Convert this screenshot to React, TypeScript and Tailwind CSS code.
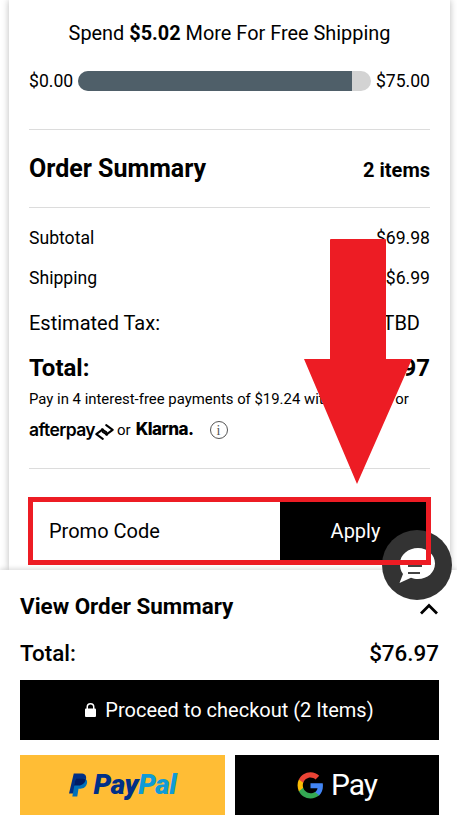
import React from "react";

function Row({ left, right, className }: { left: React.ReactNode; right: React.ReactNode; className: string }) {
  return (
    <div className={`flex items-center justify-between ${className}`}>
      <span>{left}</span>
      <span>{right}</span>
    </div>
  );
}

function GoogleG() {
  return (
    <svg width="27" height="27" viewBox="0 0 48 48" aria-hidden="true">
      <path fill="#4285F4" d="M46.100 24.500c0-1.600-.1-3.100-.4-4.500H24v8.900h12.500c-.5 2.900-2.200 5.400-4.600 7v5.800h7.500c4.300-4 6.700-9.900 6.700-17.200z" />
      <path fill="#34A853" d="M24 47c6.200 0 11.400-2.100 15.400-5.700l-7.500-5.800c-2.100 1.400-4.700 2.200-7.900 2.200-6 0-11.200-4.100-13-9.600H3.300v6C7.100 41.700 15 47 24 47z" />
      <path fill="#FBBC05" d="M11 28.100c-.5-1.400-.7-2.900-.7-4.400s.3-3 .7-4.400v-6H3.300C1.800 16.400 1 19.900 1 23.700s.8 7.300 2.300 10.400l7.700-6z" />
      <path fill="#EA4335" d="M24 9.700c3.400 0 6.500 1.200 8.900 3.500l6.600-6.600C35.400 2.900 30.200.5 24 .5 15 .5 7.100 5.700 3.300 13.300l7.700 6c1.800-5.500 7-9.600 13-9.600z" />
    </svg>
  );
}

function PayPalMark() {
  return (
    <svg width="19" height="24" viewBox="0 0 20 24" aria-hidden="true">
      <path fill="#003087" d="M5 0h7.500C16.500 0 18.500 2 18 5.500 17.300 10 14 12.500 10 12.500H7.500L6 21H0L5 0z" />
      <path fill="#0070BA" d="M7 5h7c3.500 0 5.500 1.600 5 5-.7 4-3.700 6-7 6h-2l-1.300 8H3.500L7 5z" />
      <path fill="#001C64" d="M7 5h6.500c1.800 0 3.200.4 4.200 1.200C16.800 10 14 12.500 10 12.500H5.300L7 5z" />
    </svg>
  );
}

function AfterpayMark() {
  return (
    <svg width="19" height="18" viewBox="0 0 22 20" fill="none" stroke="#000" strokeWidth="2.300" strokeLinejoin="round" strokeLinecap="round" className="mt-[3px]" aria-hidden="true">
      <path d="M13 2l7.500 5.500L13 13v-3L8 7" />
      <path d="M9 18l-7.500-5.500L9 7v3l5 3" />
    </svg>
  );
}

export default function App() {
  return (
    <div className="relative h-[822px] w-[457px] overflow-hidden bg-white font-['Roboto',sans-serif] text-black">
      <main className="ml-[9px] h-[570px] w-[441px] bg-white px-5 shadow-[0_0_7px_rgba(0,0,0,0.28)]">
        <p className="mb-[3px] flex h-[68px] items-center justify-center text-[19.900px]">
          <span>
            Spend <b className="font-bold">$5.02</b> More For Free Shipping
          </span>
        </p>
        <div className="flex h-[20px] items-center justify-between text-[17.600px]">
          <span>$0.00</span>
          <div className="h-5 w-[293px] overflow-hidden rounded-[10px] bg-[#d3d3d3]">
            <div className="h-full w-[274px] bg-[#4f5f69]" />
          </div>
          <span>$75.00</span>
        </div>
        <div className="mt-[38px] h-px bg-[#dcdcdc]" />
        <Row left="Order Summary" right={<span className="text-[20px]">2 items</span>} className="h-[77px] text-[25px] font-bold" />
        <div className="h-px bg-[#dcdcdc]" />
        <Row left="Subtotal" right="$69.98" className="mt-[10px] h-[40px] text-[17.600px]" />
        <Row left="Shipping" right="$6.99" className="h-[40px] text-[17.600px]" />
        <div className="flex h-[50px] items-center justify-between text-[20px]">
          <span>Estimated Tax:</span>
          <span className="pr-[10px]">TBD</span>
        </div>
        <Row left="Total:" right="$76.97" className="h-[40px] text-[24px] font-bold" />
        <p className="flex h-[22px] items-center whitespace-nowrap text-[14.900px]">Pay in 4 interest-free payments of $19.24 with Afterpay or</p>
        <div className="flex h-[40px] items-center">
          <span className="font-['Inter',sans-serif] text-[17.500px] font-semibold tracking-[-0.6px]">afterpay</span>
          <AfterpayMark />
          <span className="ml-[3px] text-[15px]">or</span>
          <span className="ml-[5px] font-['Inter',sans-serif] text-[17px] font-extrabold tracking-[-0.5px]">Klarna.</span>
          <span className="ml-[16px] flex h-[18px] w-[18px] items-center justify-center rounded-full border border-[#555] font-['Liberation_Serif',serif] text-[14px] text-[#555]">i</span>
        </div>
        <div className="mt-[18px] h-px bg-[#dcdcdc]" />
        <div className="mt-[33px] ml-[4px] flex h-[58px] w-[394px] text-[20px]">
          <div className="flex w-[247px] items-center pl-4">Promo Code</div>
          <div className="flex flex-1 items-center justify-center bg-black pl-[4px] text-white">Apply</div>
        </div>
      </main>

      <section className="relative z-10 h-[252px] bg-white pl-5 pr-[18px] shadow-[0_-2px_4px_rgba(0,0,0,0.12)]">
        <div className="flex h-[73px] items-center justify-between">
          <span className="text-[22.400px] font-bold">View Order Summary</span>
          <svg width="20" height="12" viewBox="0 0 20 12" fill="none" stroke="#000" strokeWidth="2.800" className="mt-1" aria-hidden="true">
            <path d="M2 10.500L10 2.500l8 8" />
          </svg>
        </div>
        <Row left="Total:" right="$76.97" className="h-[22px] text-[22.400px] font-bold [&>span]:font-medium" />
        <button className="mt-[15px] flex h-[60px] w-full items-center justify-center gap-[9px] bg-black text-[20px] text-white">
          <svg width="11" height="14" viewBox="0 0 11 14" aria-hidden="true">
            <path fill="#fff" d="M1.500 5.500V4a4 4 0 0 1 8 0v1.500h.3c.6 0 1.200.5 1.200 1.200v6c0 .7-.5 1.300-1.200 1.300H1.200C.5 14 0 13.400 0 12.700v-6c0-.7.500-1.200 1.200-1.200zM3 5.500h5V4a2.500 2.500 0 0 0-5 0z" />
          </svg>
          Proceed to checkout (2 Items)
        </button>
        <div className="mt-[15px] flex h-[60px] gap-[10px]">
          <div className="flex w-[205px] items-center justify-center gap-[6px] bg-[#ffbd35]">
            <PayPalMark />
            <span className="text-[28px] font-black italic tracking-[-0.4px]">
              <span className="text-[#003087]">Pay</span>
              <span className="text-[#0f9bd7]">Pal</span>
            </span>
          </div>
          <div className="flex flex-1 items-center justify-center gap-[7px] bg-black">
            <GoogleG />
            <span className="text-[30px] font-normal leading-none tracking-[-1px] text-white">Pay</span>
          </div>
        </div>
      </section>

      {/* Floating chat button */}
      <div className="absolute left-[382px] top-[530px] z-20 flex h-[70px] w-[70px] items-center justify-center rounded-full bg-[#333333]">
        <svg width="38" height="37" viewBox="0 0 38 37" aria-hidden="true">
          <path fill="#fff" d="M20 1c9.500 0 17 6.500 17 15.500S29.500 32 20 32c-2.500 0-5-.4-7-1.300L1.500 36 5 27C2.500 24 2 20 2 16.500 2 7.500 10.500 1 20 1z" />
          <path stroke="#444" strokeWidth="2" d="M10 19h14M10 26h12" />
        </svg>
      </div>

      {/* Red annotations drawn over the page */}
      <div className="absolute left-[28px] top-[497px] z-30 h-[68px] w-[403px] border-[5px] border-[#ed1c24]" />
      <svg className="absolute left-[304px] top-[239px] z-30" width="108" height="246" viewBox="0 0 108 246" aria-hidden="true">
        <path fill="#ed1c24" d="M26 1q0-1 1-1h54q1 0 1 1v119h26L53 245 0 120h26z" />
      </svg>
    </div>
  );
}
